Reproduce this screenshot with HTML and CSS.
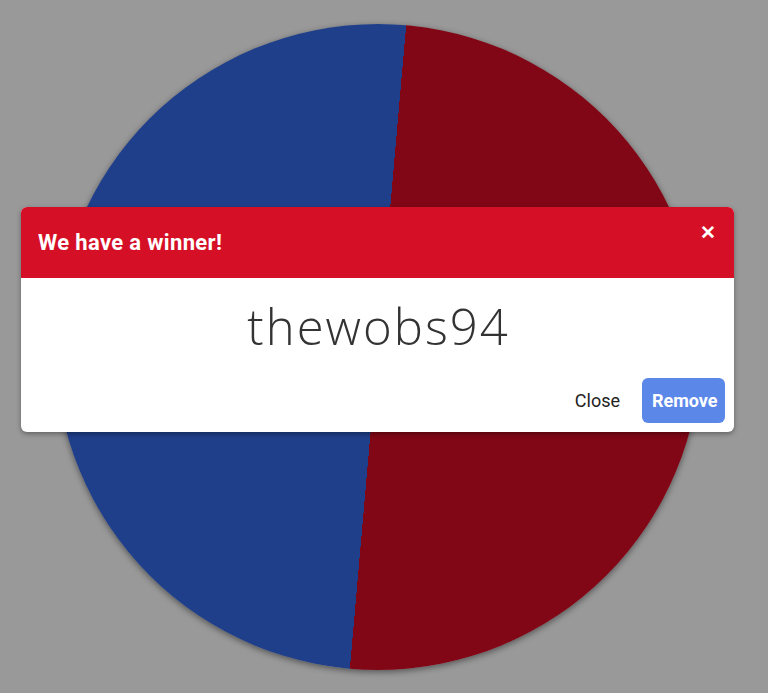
FILE: index.html
```html
<!DOCTYPE html>
<html>
<head>
<meta charset="utf-8">
<link rel="stylesheet" href="styles.css">
</head>
<body>
<div class="stage">
  <div class="wheel"></div>
</div>
<div class="modal">
  <div class="modal-header">
    <h2 class="modal-title">We have a winner!</h2>
    <span class="modal-x">&#x2715;</span>
  </div>
  <div class="modal-body">
    <div class="winner">thewobs94</div>
  </div>
  <div class="modal-footer">
    <button class="btn btn-plain">Close</button>
    <button class="btn btn-primary">Remove</button>
  </div>
</div>
</body>
</html>
```
FILE: styles.css
```css
html, body {
  margin: 0;
  padding: 0;
  background: #999999;
  width: 768px;
  height: 693px;
  overflow: hidden;
  font-family: Roboto, "Liberation Sans", sans-serif;
}
.stage {
  padding: 24px 0 0 55px;
}
.wheel {
  width: 646px;
  height: 646px;
  border-radius: 50%;
  background: conic-gradient(from 5deg, #810716 0deg 180deg, #1f3f8a 180deg 360deg);
  box-shadow: 0 2px 6px rgba(0,0,0,0.45);
}
.modal {
  position: absolute;
  left: 21px;
  top: 207px;
  width: 713px;
  background: #fff;
  border-radius: 6px;
  overflow: hidden;
  box-shadow: 0 2px 5px rgba(0,0,0,0.35);
}
.modal-header {
  background: #d50f25;
  height: 71px;
  display: flex;
  justify-content: space-between;
  align-items: flex-start;
  padding: 0 18px 0 17px;
}
.modal-title {
  margin: 23px 0 0;
  color: #fff;
  font-size: 22px;
  font-weight: 700;
  line-height: 26px;
  letter-spacing: 0.35px;
}
.modal-x {
  color: #fff;
  font-size: 19px;
  font-weight: 700;
  margin-top: 15px;
  line-height: 22px;
}
.modal-body {
  display: flex;
  justify-content: center;
  padding: 16px 0 10px;
}
.winner {
  font-family: "Open Sans", Lato, sans-serif;
  font-weight: 300;
  font-size: 49px;
  line-height: 64px;
  color: #333;
  letter-spacing: 2px;
  margin-right: -2px;
}
.modal-footer {
  display: flex;
  justify-content: flex-end;
  align-items: center;
  gap: 4px;
  padding: 10px 9px 9px;
}
.btn {
  font-family: Roboto, "Liberation Sans", sans-serif;
  font-size: 18px;
  border: none;
  border-radius: 6px;
  height: 45px;
  padding: 0 10px;
  cursor: pointer;
}
.btn-plain {
  background: transparent;
  color: #222;
  font-weight: 400;
  padding: 0 18px;
}
.btn-primary {
  background: #5b87e9;
  color: #fff;
  font-weight: 700;
  width: 83px;
}
```
